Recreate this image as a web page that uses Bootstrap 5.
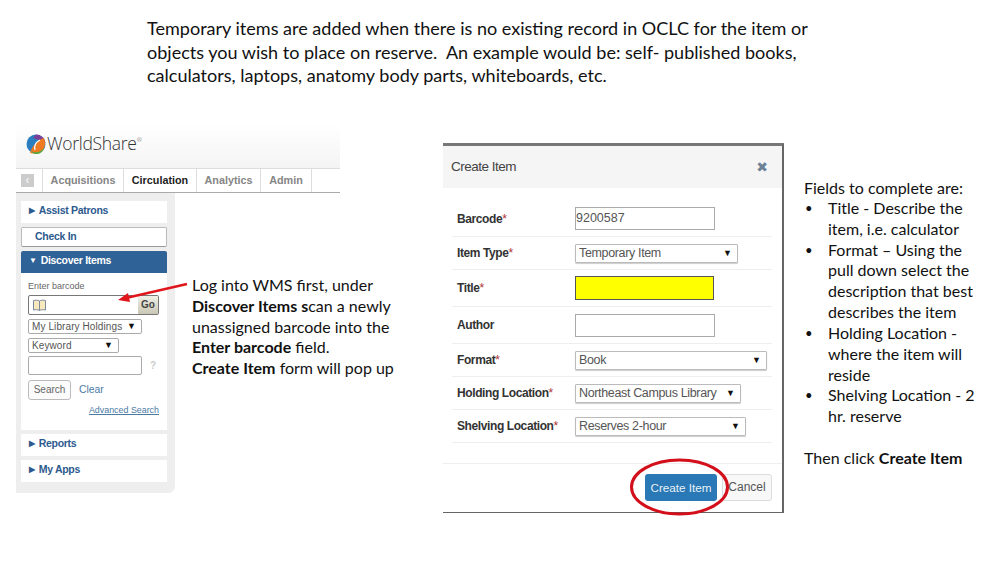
<!DOCTYPE html>
<html lang="en"><head><meta charset="utf-8"><title>Create Item</title>
<link href="https://cdn.jsdelivr.net/npm/bootstrap@5.3.0/dist/css/bootstrap.min.css" rel="stylesheet">
<style>
html,body{margin:0;background:#fff;overflow:hidden}
.slide{position:relative;width:999px;height:562px;overflow:hidden;font-family:Lato,"Open Sans",sans-serif;color:#111}
.intro{padding:17px 0 0 147px;font-size:18.04px;line-height:23.5px;height:124px;margin:0}
.stage{align-items:flex-start}
.leftcol{width:443px;padding-left:16px;flex:none}
.wms{font-family:"Liberation Sans",Arial,sans-serif}
.wmshead{width:324px;height:44px;background:linear-gradient(#fff,#f4f4f4);padding:10px 0 0 10px;gap:1px}
.wmsname{font-family:"Open Sans",sans-serif;font-weight:300;font-size:17.5px;color:#333;line-height:19px;letter-spacing:-.3px}
.wmsname sup{font-size:6px;top:-8px}
.wmsnav{width:324px;height:25px;border-top:1px solid #ddd;border-bottom:1px solid #aaa;background:#fff}
.wmstab{height:23px;line-height:23px;border-right:1px solid #ddd;font-size:10.8px;font-weight:700;color:#858585;text-align:center}
.tb0{width:27px;padding:5px 0 0 5px}.tb1{width:81px}.tb2{width:73px;color:#222}.tb3{width:64px}.tb4{width:51px}
.backbox{width:13px;height:13px;background:#ccc;color:#eee;display:block;font-size:13px;line-height:12px;text-align:center}
.sidebar{width:159px;height:300px;background:#eee;border-bottom-right-radius:7px;padding:8px 8px 0 5px;flex:none}
.sideitem{height:22px;background:#fff;color:#2d5a8e;font-size:10.5px;letter-spacing:-.3px;font-weight:700;line-height:19px;padding-left:8px;margin-bottom:4px}
.sideitem .arr{font-size:8px;margin-right:4px;vertical-align:1px}
.checkin{height:20px;border:1px solid #bbb;border-bottom-color:#999;border-radius:2px;padding-left:13px;line-height:17px}
.sideopen{background:#2f6296;color:#fff;margin-bottom:0;border-radius:2px 2px 0 0;line-height:18px}
.sidebody{height:157px;background:#fff;padding:7px 8px 0 7px;margin-bottom:4px;font-size:10px;color:#666}
.enterlbl{font-size:9px;line-height:12px;margin-bottom:3px}
.scanbox{width:131px;height:20px;border:1px solid #777;border-radius:2px;margin-bottom:4px;padding-left:3px}
.gobtn{width:20px;height:18px;background:linear-gradient(#f0efe6,#c9c7b4);color:#444;font-size:10px;font-weight:700;text-align:center;line-height:18px}
.mini{height:15px;border:1px solid #aaa;border-radius:2px;font-size:10px;line-height:13px;padding:0 5px 0 3px;margin-bottom:4px;color:#555;letter-spacing:.1px}
.mini .tri,.fpick .tri{color:#111;font-size:9px;letter-spacing:0}
.w114{width:114px}.w91{width:91px;margin-bottom:3px}
.blankrow{height:19px;margin-bottom:5px}
.blank{width:114px;height:19px;border:1px solid #aaa;border-radius:2px}
.qmark{font-size:10px;color:#ccc;font-weight:700;margin-left:8px}
.srch{width:43px;height:20px;border:1px solid #bbb;border-radius:3px;text-align:center;line-height:18px;color:#666;font-size:10px;background:#fbfbfb}
.clr{margin-left:8px;color:#4a7aa5;font-size:10.4px}
.advs{font-size:8.9px;color:#4a7aa5;text-decoration:underline;text-align:right;margin-top:3px;line-height:14px}
.note{padding-top:82px;margin-left:17px;width:215px;flex:none;font-family:Lato,sans-serif;color:#111;font-size:16px;line-height:20.8px;white-space:nowrap}
.dialog{width:341px;height:370px;margin-top:19px;border-top:3px solid #777;border-right:2px solid #666;border-bottom:1px solid #666;font-family:"Liberation Sans",Arial,sans-serif;flex:none;margin-right:20px}
.dhead{height:42px;background:#f5f5f5;padding:0 14px 0 8px;font-size:13.5px;letter-spacing:-.5px;color:#444}
.dclose{font-family:"DejaVu Sans",sans-serif;font-size:14px;color:#6d8296;line-height:1;letter-spacing:0}
.dbody{height:276px;padding:13px 10px 0 9px;border-bottom:1px solid #eee}
.frow{border-bottom:1px solid #eee;height:33px}
.frow.tall{height:37px}.frow.first{height:36px}
.flabel{width:123px;padding-left:5px;font-size:12px;letter-spacing:-.4px;font-weight:700;color:#333;flex:none}
.flabel i{color:#b03030;font-style:normal;font-weight:400}
.finput{width:140px;height:23px;border:1px solid #aaa;font-size:12.5px;color:#555;line-height:21px}
.finput.yel{background:#ff0;border-color:#555;width:139px;height:24px}
.fpick{height:19px;border:1px solid #bbb;border-radius:1px;box-shadow:0 1px 1px #ccc;font-size:12.5px;letter-spacing:-.35px;color:#555;padding:0 5px 0 3px;line-height:17px}
.w163{width:163px}.w192{width:192px}.w166{width:166px}.w171{width:171px}
.dfoot{padding:10px 10px 0 0;gap:5px}
.okbtn{width:72px;height:27px;background:#2a78b5;color:#e8f1f8;font-size:11.7px;border-radius:3px;line-height:27px;text-align:center}
.nobtn{width:50px;height:27px;border:1px solid #ddd;border-radius:3px;background:#f8f8f8;color:#555;font-size:12px;line-height:25px;text-align:center}
.fields{font-size:16px;line-height:20.85px;padding-top:54px;width:190px;flex:none;white-space:nowrap}
.fieldlist{list-style:none;padding:0;margin:-1px 0 20.85px}
.fieldlist li{position:relative;padding-left:24px}
.fieldlist li::before{content:"•";position:absolute;left:1px;font-size:13px}
.marks{position:absolute;left:0;top:0;pointer-events:none}
</style></head><body>
<div class="slide">
<p class="intro">Temporary items are added when there is no existing record in OCLC for the item or<br>objects you wish to place on reserve.&nbsp; An example would be: self- published books,<br>calculators, laptops, anatomy body parts, whiteboards, etc.</p>
<div class="stage d-flex">
 <div class="leftcol">
  <div class="wms">
   <div class="wmshead d-flex align-items-start">
    <svg width="20" height="20" viewBox="0 0 20 20"><circle cx="10" cy="10" r="9.5" fill="#2b7fc1"/><path d="M10 .5A9.5 9.5 0 0 1 19.5 9L13 6 7 4z" fill="#7b3f98"/><path d="M4 19C6 12 11 6 18 4c2 5 1 10-2 13-3 2-8 3-12 2z" fill="#ee7b22"/><path d="M5 17c4 2 9 2 13-3-1 4-4 6-8 6-2 0-4-1-5-3z" fill="#5aa63c"/><path d="M9 16c-1-4 1-8 5-10" stroke="#fff" stroke-width="1.2" fill="none"/></svg>
    <span class="wmsname">WorldShare<sup>®</sup></span>
   </div>
   <div class="wmsnav d-flex">
    <div class="wmstab tb0"><span class="backbox">‹</span></div>
    <div class="wmstab tb1">Acquisitions</div><div class="wmstab tb2">Circulation</div><div class="wmstab tb3">Analytics</div><div class="wmstab tb4">Admin</div>
   </div>
   <div class="d-flex">
    <div class="sidebar">
     <div class="sideitem"><span class="arr">▶</span>Assist Patrons</div>
     <div class="sideitem checkin">Check In</div>
     <div class="sideitem sideopen"><span class="arr">▼</span>Discover Items</div>
     <div class="sidebody">
      <div class="enterlbl">Enter barcode</div>
      <div class="scanbox d-flex justify-content-between align-items-center">
       <svg width="15" height="13" viewBox="0 0 15 13"><path d="M7.5 2C6 1 3.5 1 1.5 1.5V11c2-.5 4.5-.5 6 .5 1.5-1 4-1 6-.5V1.5C11.5 1 9 1 7.5 2z" fill="#f8e8bd" stroke="#7d8a9c"/><path d="M7.5 2v9.5" stroke="#7d8a9c"/></svg>
       <span class="gobtn">Go</span>
      </div>
      <div class="mini w114 d-flex justify-content-between align-items-center"><span>My Library Holdings</span><span class="tri">▼</span></div>
      <div class="mini w91 d-flex justify-content-between align-items-center"><span>Keyword</span><span class="tri">▼</span></div>
      <div class="blankrow d-flex align-items-center"><div class="blank"></div><span class="qmark">?</span></div>
      <div class="d-flex align-items-center"><div class="srch">Search</div><span class="clr">Clear</span></div>
      <div class="advs">Advanced Search</div>
     </div>
     <div class="sideitem"><span class="arr">▶</span>Reports</div>
     <div class="sideitem"><span class="arr">▶</span>My Apps</div>
    </div>
    <div class="note">Log into WMS first, under<br><b>Discover Items s</b>can a newly<br>unassigned barcode into the<br><b>Enter barcode</b> field.<br><b>Create Item</b> form will pop up</div>
   </div>
  </div>
 </div>
 <div class="dialog">
  <div class="dhead d-flex justify-content-between align-items-center"><span>Create Item</span><span class="dclose">✖</span></div>
  <div class="dbody">
   <div class="frow first d-flex align-items-center"><span class="flabel">Barcode<i>*</i></span><div class="finput">9200587</div></div>
   <div class="frow d-flex align-items-center"><span class="flabel">Item Type<i>*</i></span><div class="fpick w163 d-flex justify-content-between align-items-center"><span>Temporary Item</span><span class="tri">▼</span></div></div>
   <div class="frow tall d-flex align-items-center"><span class="flabel">Title<i>*</i></span><div class="finput yel"></div></div>
   <div class="frow tall d-flex align-items-center"><span class="flabel">Author</span><div class="finput"></div></div>
   <div class="frow d-flex align-items-center"><span class="flabel">Format<i>*</i></span><div class="fpick w192 d-flex justify-content-between align-items-center"><span>Book</span><span class="tri">▼</span></div></div>
   <div class="frow d-flex align-items-center"><span class="flabel">Holding Location<i>*</i></span><div class="fpick w166 d-flex justify-content-between align-items-center"><span>Northeast Campus Library</span><span class="tri">▼</span></div></div>
   <div class="frow d-flex align-items-center"><span class="flabel">Shelving Location<i>*</i></span><div class="fpick w171 d-flex justify-content-between align-items-center"><span>Reserves 2-hour</span><span class="tri">▼</span></div></div>
  </div>
  <div class="dfoot d-flex justify-content-end"><div class="okbtn">Create Item</div><div class="nobtn">Cancel</div></div>
 </div>
 <div class="fields">Fields to complete are:
  <ul class="fieldlist">
   <li>Title - Describe the<br>item, i.e. calculator</li>
   <li>Format – Using the<br>pull down select the<br>description that best<br>describes the item</li>
   <li>Holding Location -<br>where the item will<br>reside</li>
   <li>Shelving Location - 2<br>hr. reserve</li>
  </ul>
  Then click <b>Create Item</b>
 </div>
</div>
<svg class="marks" width="999" height="562" viewBox="0 0 999 562">
 <path d="M187 284 126 298" stroke="#e0161c" stroke-width="2.5" fill="none"/><path d="M118 300 128 293 130 302z" fill="#e0161c"/>
 <ellipse cx="679.5" cy="487" rx="48" ry="27" fill="none" stroke="#d20f1a" stroke-width="3"/>
</svg>
</div>
<script src="https://cdn.jsdelivr.net/npm/bootstrap@5.3.0/dist/js/bootstrap.bundle.min.js"></script>
</body></html>
